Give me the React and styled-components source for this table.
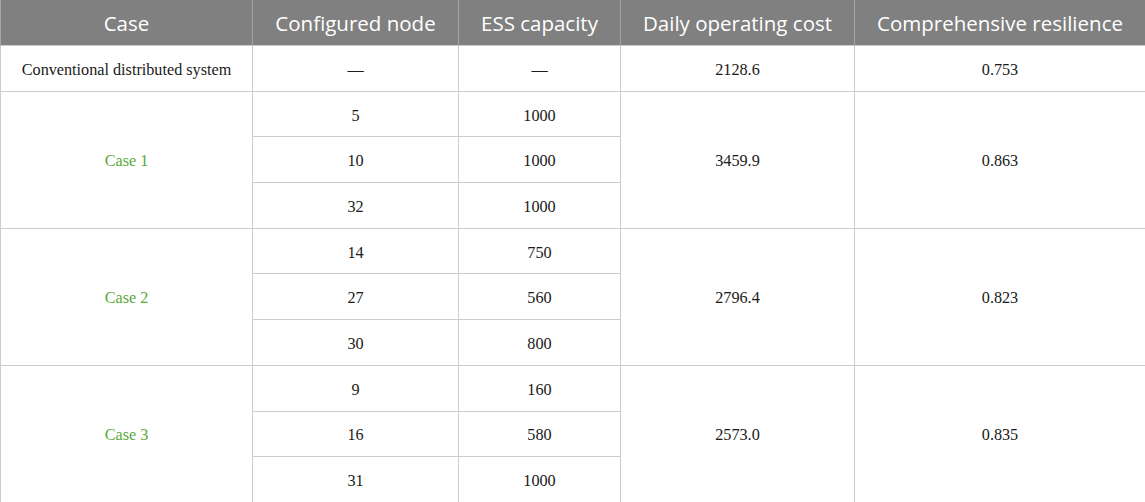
import React from "react";
import styled, { createGlobalStyle } from "styled-components";

const Global = createGlobalStyle`
  html, body { margin: 0; padding: 0; background: #fff; }
`;

const Table = styled.table`
  width: 1145px;
  border-collapse: collapse;
  table-layout: fixed;
`;

const Th = styled.th`
  background: #808080;
  color: #fff;
  font-family: "Open Sans", "Noto Sans", sans-serif;
  font-weight: 400;
  font-size: 20.5px;
  height: 45px;
  padding: 0;
  text-align: center;
  border-left: 1px solid #a6a6a6;
  border-right: 1px solid #a6a6a6;
  white-space: nowrap;
`;

const Tr = styled.tr`
  height: 45.7px;
`;

const Td = styled.td`
  font-family: "Liberation Serif", "DejaVu Serif", serif;
  font-size: 16.2px;
  color: ${(p) => (p.$green ? "#5aab3a" : "#1a1a1a")};
  text-align: center;
  vertical-align: middle;
  padding: 4px 0 0;
  border: 1px solid #cccccc;
`;

const widths = [252, 206, 162, 234, 291];
const headers = ["Case", "Configured node", "ESS capacity", "Daily operating cost", "Comprehensive resilience"];

const groups = [
  { name: "Case 1", rows: [["5", "1000"], ["10", "1000"], ["32", "1000"]], cost: "3459.9", res: "0.863" },
  { name: "Case 2", rows: [["14", "750"], ["27", "560"], ["30", "800"]], cost: "2796.4", res: "0.823" },
  { name: "Case 3", rows: [["9", "160"], ["16", "580"], ["31", "1000"]], cost: "2573.0", res: "0.835" },
];

export default function App() {
  return (
    <>
      <Global />
      <Table>
        <colgroup>
          {widths.map((w, i) => (
            <col key={i} style={{ width: w }} />
          ))}
        </colgroup>
        <thead>
          <tr>
            {headers.map((h) => (
              <Th key={h}>{h}</Th>
            ))}
          </tr>
        </thead>
        <tbody>
          <Tr>
            <Td>Conventional distributed system</Td>
            <Td>—</Td>
            <Td>—</Td>
            <Td>2128.6</Td>
            <Td>0.753</Td>
          </Tr>
          {groups.map((g) =>
            g.rows.map((r, i) => (
              <Tr key={g.name + i}>
                {i === 0 && (
                  <Td $green rowSpan={3}>
                    {g.name}
                  </Td>
                )}
                <Td>{r[0]}</Td>
                <Td>{r[1]}</Td>
                {i === 0 && <Td rowSpan={3}>{g.cost}</Td>}
                {i === 0 && <Td rowSpan={3}>{g.res}</Td>}
              </Tr>
            ))
          )}
        </tbody>
      </Table>
    </>
  );
}
